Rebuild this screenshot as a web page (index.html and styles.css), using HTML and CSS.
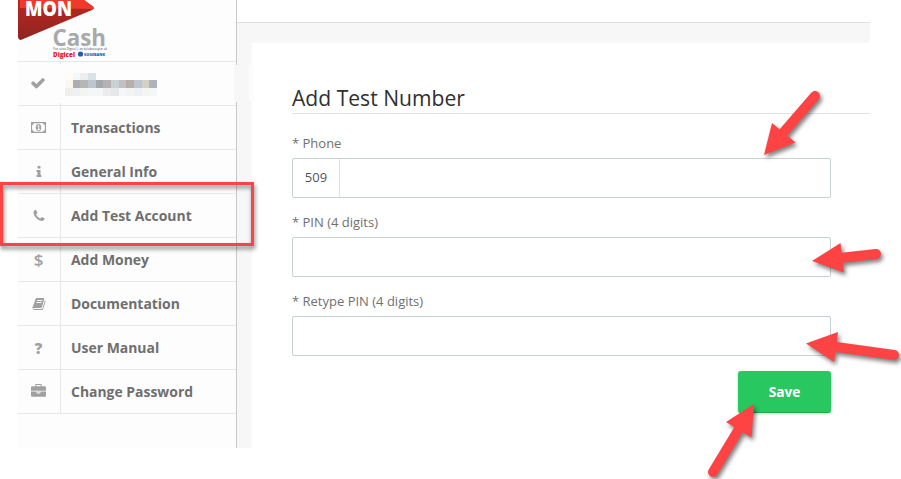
FILE: index.html
```html
<!DOCTYPE html>
<html lang="en">
<head>
<meta charset="utf-8">
<title>MonCash - Add Test Number</title>
<link rel="stylesheet" href="styles.css">
</head>
<body>
<div class="app">
  <aside class="sidebar">
    <div class="brand">
      <svg width="100" height="61" viewBox="18 0 100 61">
        <defs>
          <linearGradient id="flag" x1="0" y1="0" x2="0" y2="1"><stop offset="0" stop-color="#b82822"/><stop offset="1" stop-color="#8f2420"/></linearGradient>
        </defs>
        <path d="M18 0H84L93 6.500Q95 8.500 92 10L22 39.500Q18.500 41 18 37Z" fill="url(#flag)"/>
        <path d="M20 0H84L93 6.500Q94.500 8 93.500 9L20 8Z" fill="#f0392d"/>
        <text class="brand-mon" x="25" y="15.700" textLength="47" lengthAdjust="spacingAndGlyphs">MON</text>
        <text class="brand-cash" x="52.500" y="45.500" textLength="53.500" lengthAdjust="spacingAndGlyphs">Cash</text>
        <text class="brand-tag" x="53" y="49.700" textLength="54" lengthAdjust="spacingAndGlyphs">Yon sèvis Digicel | an kolaborasyon ak</text>
        <text class="brand-digicel" x="53" y="56.500" textLength="22" lengthAdjust="spacingAndGlyphs">Digicel</text>
        <circle cx="80.500" cy="54" r="2.600" fill="#1c5fb0"/>
        <text class="brand-bank" x="84" y="55.700" textLength="21" lengthAdjust="spacingAndGlyphs">SOGEBANK</text>
      </svg>
    </div>
    <nav class="menu">
      <a class="item account"><span class="icon"><svg width="16" height="16" viewBox="0 0 1792 1792"><path d="M1671 566q0 40-28 68l-724 724-136 136q-28 28-68 28t-68-28l-136-136-362-362q-28-28-28-68t28-68l136-136q28-28 68-28t68 28l294 295 656-657q28-28 68-28t68 28l136 136q28 28 28 68z"/></svg></span>
        <span class="mask">
          <i class="c1"></i><i class="c2"></i><i class="c3"></i><i class="c4"></i><i></i><i></i><i></i><i></i><i></i><i></i><i></i><i></i>
          <i class="c5"></i><i class="c6"></i><i class="c7"></i><i class="c8"></i><i class="c9"></i><i class="c10"></i><i class="c11"></i><i class="c12"></i><i class="c13"></i><i class="c8"></i><i class="c14"></i><i class="c15"></i>
          <i class="c16"></i><i class="c17"></i><i class="c18"></i><i class="c19"></i><i class="c19"></i><i class="c20"></i><i class="c21"></i><i class="c19"></i><i class="c18"></i><i class="c17"></i><i class="c18"></i><i class="c19"></i>
        </span></a>
      <a class="item"><span class="icon"><svg width="15" height="11" viewBox="0 0 16 11" preserveAspectRatio="none"><path fill-rule="evenodd" d="M0 0H16V11H0ZM3 1.200A2 2 0 0 1 1.200 3V8A2 2 0 0 1 3 9.800H13A2 2 0 0 1 14.800 8V3A2 2 0 0 1 13 1.200Z"/><ellipse cx="8" cy="5.500" rx="2.900" ry="3.600"/><path d="M7 4.200L8.200 3.200V7.400M6.800 7.500H9.500" fill="none" stroke="#fff"/></svg></span><span class="label">Transactions</span></a>
      <a class="item"><span class="icon"><svg width="14" height="14" viewBox="0 0 1792 1792"><path d="M1216 1344v128q0 26-19 45t-45 19h-512q-26 0-45-19t-19-45v-128q0-26 19-45t45-19h64v-384h-64q-26 0-45-19t-19-45v-128q0-26 19-45t45-19h384q26 0 45 19t19 45v576h64q26 0 45 19t19 45zm-128-1152v192q0 26-19 45t-45 19h-256q-26 0-45-19t-19-45v-192q0-26 19-45t45-19h256q26 0 45 19t19 45z"/></svg></span><span class="label">General Info</span></a>
      <a class="item"><span class="icon"><svg width="14" height="14" viewBox="0 0 1792 1792"><path d="M1600 1240q0 27-10 70.500t-21 68.500q-21 50-122 106-94 51-186 51-27 0-53-3.500t-57-12.500-47-14.500-55.500-20.500-49.500-18q-98-35-175-83-127-79-264-216t-216-264q-48-77-83-175-3-9-18-49.500t-20.500-55.500-14.500-47-12.500-57-3.500-53q0-92 51-186 56-101 106-122 25-11 68.500-21t70.500-10q14 0 21 3 18 6 53 76 11 19 30 54t35 63.500 31 53.500q3 4 17.500 25t21.500 35.500 7 28.500q0 20-28.500 50t-62 55-62 53-28.500 46q0 9 5 22.500t8.500 20.500 14 24 11.500 19q76 137 174 235t235 174q2 1 19 11.500t24 14 20.500 8.500 22.500 5q18 0 46-28.500t53-62 55-62 50-28.500q14 0 28.500 7t35.500 21.500 25 17.500q25 15 53.500 31t63.500 35 54 30q70 35 76 53 3 7 3 21z"/></svg></span><span class="label">Add Test Account</span></a>
      <a class="item"><span class="icon glyph dollar">$</span><span class="label">Add Money</span></a>
      <a class="item"><span class="icon"><svg width="14" height="14" viewBox="0 0 1792 1792"><path d="M1703 478q40 57 18 129l-275 906q-19 64-76.500 107.500t-122.500 43.500h-923q-77 0-148.500-53.500t-99.500-131.500q-24-67-2-127 0-4 3-27t4-37q1-8-3-21.500t-3-19.500q2-11 8-21t16.500-23.500 16.500-23.500q23-38 45-91.500t30-91.500q3-10 .5-30t-.5-28q3-11 17-28t17-23q21-36 42-92t25-90q1-9-2.500-32t.5-28q4-13 22-30.500t22-22.500q19-26 42.500-84.500t27.500-96.500q1-8-3-25.500t-2-26.500q2-8 9-18t18-23 17-21q8-12 16.500-30.500t15-35 16-36 19.500-32 26.500-23.500 36-11.500 47.500 5.500l-1 3q38-9 51-9h761q74 0 114 56t18 130l-274 906q-36 119-71.500 153.500t-128.500 34.500h-869q-27 0-38 15-11 16-1 43 24 70 144 70h923q29 0 56-15.500t35-41.500l300-987q7-22 5-57 38 15 59 43zm-1064 2q-4 13 2 22.500t20 9.500h608q13 0 25.500-9.500t16.500-22.500l21-64q4-13-2-22.500t-20-9.500h-608q-13 0-25.500 9.500t-16.500 22.500zm-83 256q-4 13 2 22.500t20 9.500h608q13 0 25.500-9.500t16.500-22.500l21-64q4-13-2-22.500t-20-9.500h-608q-13 0-25.500 9.500t-16.500 22.500z"/></svg></span><span class="label">Documentation</span></a>
      <a class="item"><span class="icon glyph">?</span><span class="label">User Manual</span></a>
      <a class="item"><span class="icon"><svg width="15" height="15" viewBox="0 0 1792 1792"><path d="M640 256h512v-128h-512v128zm1152 640v480q0 66-47 113t-113 47h-1472q-66 0-113-47t-47-113v-480h672v160q0 26 19 45t45 19h320q26 0 45-19t19-45v-160h672zm-768 0v128h-256v-128h256zm768-480v384h-1792v-384q0-66 47-113t113-47h352v-160q0-40 28-68t68-28h576q40 0 68 28t28 68v160h352q66 0 113 47t47 113z"/></svg></span><span class="label">Change Password</span></a>
    </nav>
  </aside>
  <main class="main">
    <header class="topbar"></header>
    <section class="panel">
      <h1 class="title">Add Test Number</h1>
      <form class="form">
        <label class="field-label">* Phone</label>
        <div class="field"><span class="prefix">509</span></div>
        <label class="field-label">* PIN (4 digits)</label>
        <div class="field"></div>
        <label class="field-label">* Retype PIN (4 digits)</label>
        <div class="field"></div>
        <button class="save" type="button">Save</button>
      </form>
    </section>
  </main>
</div>
<div class="patch"></div>
<div class="highlight"></div>
<svg class="arrows" width="901" height="479" viewBox="0 0 901 479">
  <g><path class="shaft" d="M815 96L783 133"/><path d="M764 155L772 123L795.500 142.500Z"/></g>
  <g><path class="shaft" d="M876 254L840 258"/><path d="M812 261L840.500 243L844 272.500Z"/></g>
  <g><path class="shaft" d="M894 355L836 347"/><path d="M806 343.500L838 332L834 362Z"/></g>
  <g><path class="shaft" d="M713 472L739 429"/><path d="M754 404L726 422L751.500 437.500Z"/></g>
</svg>
</body>
</html>
```
FILE: styles.css
```css
* { box-sizing: border-box; }
body {
  margin: 0;
  width: 901px;
  height: 479px;
  overflow: hidden;
  background: #fff;
  font-family: "Open Sans", sans-serif;
}
.app { display: flex; width: 870px; height: 448px; padding-left: 18px; }
.sidebar { width: 219px; border-right: 1px solid #c8c8c8; background: #fdfdfd; }
.brand { height: 61px; overflow: hidden; }
.brand svg { display: block; }
.brand-mon { font: 800 21.500px "Open Sans", sans-serif; fill: #fff; }
.brand-cash { font: 700 23.500px "Open Sans", sans-serif; fill: #a7a9ac; }
.brand-tag { font: 2.800px "Open Sans", sans-serif; fill: #444; }
.brand-digicel { font: 800 6.500px "Open Sans", sans-serif; fill: #e3202b; }
.brand-bank { font: 800 4px "Open Sans", sans-serif; fill: #1c5fb0; }

.menu { border-bottom: 1px solid #e7e7e7; }
.item { display: flex; height: 44px; border-top: 1px solid #e7e7e7; }
.icon {
  display: flex;
  align-items: center;
  justify-content: center;
  width: 43px;
  padding-right: 1px;
  border-right: 1px solid #e7e7e7;
  color: #a0a0a0;
}
.icon svg { fill: #a0a0a0; }
.glyph { font-weight: 800; font-size: 15px; }
.dollar { font-weight: 600; font-size: 17px; }
.label { padding-left: 10px; line-height: 44px; font-weight: 700; font-size: 13.950px; color: #6f6f6f; }
.account .icon {
  padding-right: 2px;
  border-image: linear-gradient(#e7e7e7 0 3px, #fdfdfd 3px 40px, #e7e7e7 40px) 1;
  border-width: 0 1px 0 0;
}
.account .icon svg { position: relative; top: -1px; }
.mask { display: grid; grid-template-columns: repeat(12, 7.670px); grid-template-rows: 7px 8px 8px; padding: 11px 0 0 4px; }
.c1 { background: #fffdf3; } .c2 { background: #f2f7fb; } .c3 { background: #eceeed; } .c4 { background: #d9e2e9; }
.c5 { background: #faf7ee; } .c6 { background: #abadb3; } .c7 { background: #b5b7b7; } .c8 { background: #bdc5ce; }
.c9 { background: #a4a9ae; } .c10 { background: #b5b1b5; } .c11 { background: #cbd0d3; } .c12 { background: #c3c0c3; }
.c13 { background: #b7aeaa; } .c14 { background: #d4d0c4; } .c15 { background: #b1b3bc; }
.c16 { background: #f0efeb; } .c17 { background: #edf1f6; } .c18 { background: #f4f4f2; } .c19 { background: #f5f6f7; }
.c20 { background: #ebebed; } .c21 { background: #e6e7e9; }

.main { flex: 1; display: flex; flex-direction: column; background: #f7f7f7; }
.topbar { height: 23px; border-bottom: 1px solid #e0e0e0; background: #fff; }
.panel { flex: 1; margin: 20px 0 0 15px; padding: 40px 0 0 40px; background: #fff; }
.title {
  margin: 0;
  height: 31px;
  line-height: 30px;
  border-bottom: 1px solid #e2e2e2;
  font-weight: 380;
  font-size: 21.100px;
  color: #303030;
}
.form { display: flex; flex-direction: column; width: 539px; padding-top: 20px; }
.field-label { height: 24px; line-height: 18px; font-size: 13px; color: #707070; }
.field { display: flex; height: 40px; margin-bottom: 15px; border: 1px solid #c7d0d2; border-radius: 2px; background: #fff; }
.prefix { width: 47px; border-right: 1px solid #dfe2e3; text-align: center; line-height: 37px; font-size: 13px; color: #555; }
.save {
  align-self: flex-end;
  width: 93px;
  height: 42px;
  padding: 0;
  border: 0;
  border-bottom: 1px solid #1fa84c;
  border-radius: 3px;
  background: #29c75f;
  box-shadow: 0 1px 3px rgba(41, 199, 95, .4);
  color: #fff;
  font: 700 13.700px "Open Sans", sans-serif;
}
.patch { position: absolute; left: 234px; top: 65px; width: 20px; height: 37px; background: linear-gradient(90deg, #f7f7f7 15px, #fcfcfc 15px); }
.highlight {
  position: absolute;
  left: 0;
  top: 182px;
  width: 254px;
  height: 64px;
  border: 3px solid #fd4343;
  filter: drop-shadow(1px 3px 2px rgba(0, 0, 0, .5));
}
.arrows { position: absolute; left: 0; top: 0; fill: #fd4343; }
.arrows g { filter: drop-shadow(2px 3px 2px rgba(0, 0, 0, .5)); }
.shaft { stroke: #fd4343; stroke-width: 10px; stroke-linecap: round; }
```
